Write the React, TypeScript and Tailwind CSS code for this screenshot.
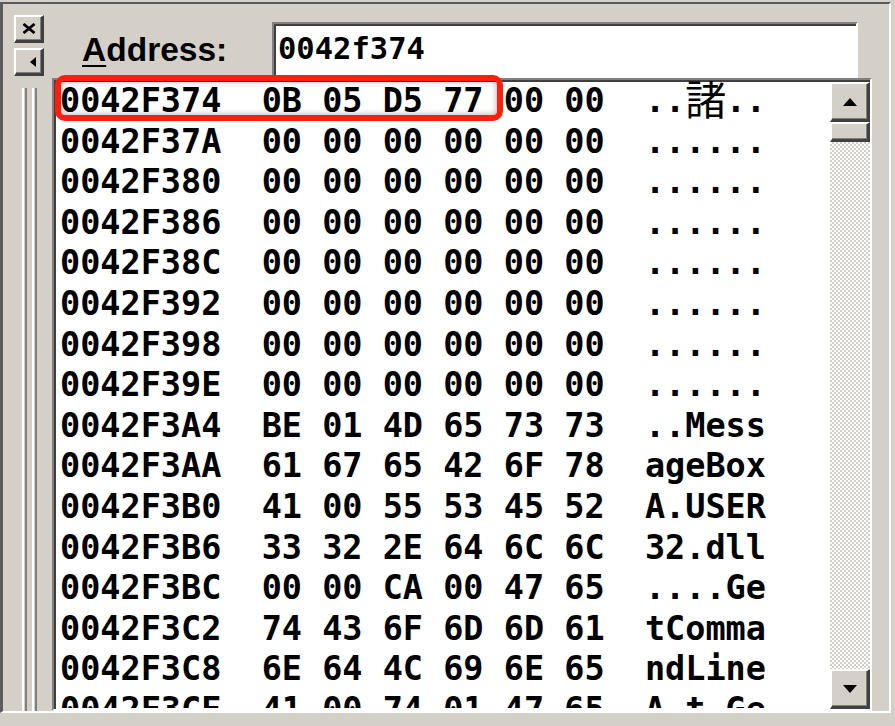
import { ReactNode } from "react";

type Row = { addr: string; bytes: string[]; ascii: ReactNode };

const rows: Row[] = [
  {
    addr: "0042F374",
    bytes: ["0B", "05", "D5", "77", "00", "00"],
    ascii: (
      <>
        ..
        <span className="inline-block w-[40.4px] text-center align-top -mt-[4px] text-[41px] leading-[40px] font-normal font-['Noto_Sans_CJK_JP',sans-serif]">
          諸
        </span>
        ..
      </>
    ),
  },
  { addr: "0042F37A", bytes: ["00", "00", "00", "00", "00", "00"], ascii: "......" },
  { addr: "0042F380", bytes: ["00", "00", "00", "00", "00", "00"], ascii: "......" },
  { addr: "0042F386", bytes: ["00", "00", "00", "00", "00", "00"], ascii: "......" },
  { addr: "0042F38C", bytes: ["00", "00", "00", "00", "00", "00"], ascii: "......" },
  { addr: "0042F392", bytes: ["00", "00", "00", "00", "00", "00"], ascii: "......" },
  { addr: "0042F398", bytes: ["00", "00", "00", "00", "00", "00"], ascii: "......" },
  { addr: "0042F39E", bytes: ["00", "00", "00", "00", "00", "00"], ascii: "......" },
  { addr: "0042F3A4", bytes: ["BE", "01", "4D", "65", "73", "73"], ascii: "..Mess" },
  { addr: "0042F3AA", bytes: ["61", "67", "65", "42", "6F", "78"], ascii: "ageBox" },
  { addr: "0042F3B0", bytes: ["41", "00", "55", "53", "45", "52"], ascii: "A.USER" },
  { addr: "0042F3B6", bytes: ["33", "32", "2E", "64", "6C", "6C"], ascii: "32.dll" },
  { addr: "0042F3BC", bytes: ["00", "00", "CA", "00", "47", "65"], ascii: "....Ge" },
  { addr: "0042F3C2", bytes: ["74", "43", "6F", "6D", "6D", "61"], ascii: "tComma" },
  { addr: "0042F3C8", bytes: ["6E", "64", "4C", "69", "6E", "65"], ascii: "ndLine" },
  { addr: "0042F3CE", bytes: ["41", "00", "74", "01", "47", "65"], ascii: "A.t.Ge" },
];

// win9x raised button
const raised =
  "bg-[#d4d0c8] border-t-2 border-l-2 border-t-white border-l-white border-r-[3px] border-b-[3px] border-r-[#404040] border-b-[#404040] shadow-[inset_-1px_-1px_#808080]";

const Ridge = () => (
  <div className="w-[5px] h-full border-l-2 border-white border-r-2 border-r-[#808080] bg-[#d4d0c8]" />
);

export default function App() {
  return (
    <div className="relative w-[895px] h-[726px] bg-[#d4d0c8] pt-[2px] overflow-hidden">
      <div className="flex w-[891px] h-[711px] border-t-2 border-l-[3px] border-[#5c5c5c] border-r-2 border-r-white border-b-2 border-b-white">
        {/* LEFT TOOL STRIP */}
        <div className="w-[49px] shrink-0 flex flex-col pl-[11px] pt-[11px]">
          <div className={`w-[30px] h-[28px] flex items-center justify-center ${raised}`}>
            <svg width="14" height="11" viewBox="0 0 14 11">
              <path d="M1.5 1 L12.5 10 M12.5 1 L1.5 10" stroke="#000" strokeWidth="2.8" />
            </svg>
          </div>
          <div className={`mt-[5px] w-[30px] h-[28px] flex items-center justify-end pr-[5px] ${raised}`}>
            <div className="w-0 h-0 border-y-[5px] border-y-transparent border-r-[6px] border-r-black" />
          </div>
          <div className="flex gap-[5px] ml-[8px] mt-[12px] flex-1">
            <Ridge />
            <Ridge />
          </div>
        </div>

        {/* MAIN */}
        <div className="flex-1 min-h-0 flex flex-col">
          <div className="h-[74px] shrink-0 flex">
            <div className="w-[220px] shrink-0 pl-[30px] pt-[26px] text-[33.5px] leading-[40px] font-bold text-black font-['Liberation_Sans',Arial,sans-serif]">
              <span className="underline decoration-2 underline-offset-[4px]">A</span>ddress:
            </div>
            <div className="mt-[18px] w-[586px] h-[56px] border-t-2 border-l-2 border-[#808080] border-r-2 border-r-white">
              <div className="h-full bg-white border-t-2 border-l-2 border-[#404040] pl-[2px] pt-[3px] text-[30.5px] leading-[40px] font-bold text-black font-['DejaVu_Sans_Mono',monospace]">
                0042f374
              </div>
            </div>
          </div>

          {/* DUMP LISTING */}
          <div className="w-[820px] flex-1 min-h-0 border-t-2 border-l-2 border-[#808080] border-r-2 border-r-white border-b-2 border-b-white">
            <div className="h-full flex border-t-2 border-l-2 border-[#404040] bg-white">
              <div className="flex-1 h-full overflow-hidden pl-[4px] -mt-[1px] text-[33.5px] font-bold text-black whitespace-pre font-['DejaVu_Sans_Mono',monospace]">
                {rows.map((r) => (
                  <div key={r.addr} className="h-[40.6px] leading-[40.6px]">
                    {r.addr + "  " + r.bytes.join(" ") + "  "}
                    {r.ascii}
                  </div>
                ))}
              </div>

              {/* SCROLLBAR */}
              <div className="w-[40px] h-full flex flex-col bg-[image:repeating-conic-gradient(#d4d0c8_0%_25%,#ffffff_0%_50%)] bg-[length:4px_4px]">
                <div className={`h-[40px] shrink-0 flex items-center justify-center ${raised}`}>
                  <div className="w-0 h-0 border-x-[7px] border-x-transparent border-b-[8px] border-b-black" />
                </div>
                <div className={`h-[20px] shrink-0 ${raised}`} />
                <div className="flex-1" />
                <div className={`h-[40px] shrink-0 flex items-center justify-center ${raised}`}>
                  <div className="w-0 h-0 border-x-[7px] border-x-transparent border-t-[8px] border-t-black" />
                </div>
              </div>
            </div>
          </div>
        </div>
      </div>

      {/* RED ANNOTATION */}
      <div className="absolute left-[55px] top-[75px] w-[448px] h-[46px] rounded-[10px] border-[6px] border-[#fd1e0b] shadow-[inset_0_0_6px_rgba(0,0,0,0.35)]" />
    </div>
  );
}
